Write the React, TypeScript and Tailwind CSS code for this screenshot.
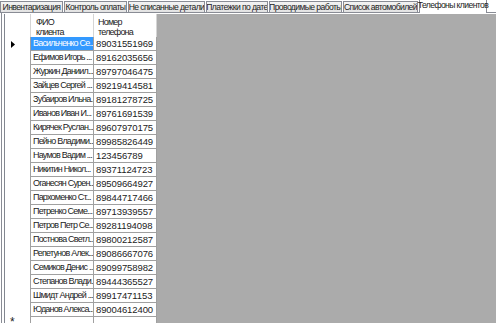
const tabs = [
  { label: "Инвентаризация", w: "w-[63px]" },
  { label: "Контроль оплаты", w: "w-[63px]" },
  { label: "Не списанные детали", w: "w-[77px]" },
  { label: "Платежки по дате", w: "w-[62px]" },
  { label: "Проводимые работы", w: "w-[73px]" },
  { label: "Список автомобилей", w: "w-[75px]" },
];

const rows: [string, string][] = [
  ["Васильченко Се...", "89031551969"],
  ["Ефимов Игорь ...", "89162035656"],
  ["Журкин Даниил...", "89797046475"],
  ["Зайцев Сергей ...", "89219414581"],
  ["Зубаиров Ильна...", "89181278725"],
  ["Иванов Иван И...", "89761691539"],
  ["Кирячек Руслан...", "89607970175"],
  ["Пейно Владими...", "89985826449"],
  ["Наумов Вадим ...", "123456789"],
  ["Никитин Никол...", "89371124723"],
  ["Оганесян Сурен...", "89509664927"],
  ["Пархоменко Ст...", "89844717466"],
  ["Петренко Семе...", "89713939557"],
  ["Петров Петр Се...", "89281194098"],
  ["Постнова Светл...", "89800212587"],
  ["Репетунов Алек...", "89086667076"],
  ["Семиков Денис ...", "89099758982"],
  ["Степанов Влади...", "89444365527"],
  ["Шмидт Андрей ...", "89917471153"],
  ["Юданов Алекса...", "89004612400"],
];

export default function App() {
  return (
    <div
      className="w-[496px] h-[323px] bg-white overflow-hidden flex flex-col text-[9px] tracking-[-0.8px] text-[#222]"
      style={{ fontFamily: '"Liberation Sans", Arial, sans-serif' }}
    >
      {/* Tab strip */}
      <div className="flex items-end h-[13px] shrink-0 border-b border-[#898c95] text-[8.6px] tracking-[-0.6px]">
        {tabs.map((t) => (
          <div
            key={t.label}
            className={`${t.w} h-[11px] mr-[1px] border border-b-0 border-[#898c95] bg-gradient-to-b from-[#f3f3f3] to-[#e2e2e2] flex items-center justify-center leading-none whitespace-nowrap overflow-hidden`}
          >
            {t.label}
          </div>
        ))}
        <div className="w-[68px] h-[14px] -mb-px border border-b-0 border-[#898c95] bg-white flex items-center justify-center leading-none whitespace-nowrap pb-[2px]">
          Телефоны клиентов
        </div>
      </div>

      {/* Tab page */}
      <div className="flex-1 flex ml-[1px] border-l border-[#898c95] pl-[2px] pt-[1px]">
        <div className="flex-1 flex flex-col bg-[#ababab] border-l border-[#828790]">
          {/* header */}
          <div className="flex h-[23px] shrink-0">
            <div className="w-[26px] bg-white border-r border-[#d5d5d5]" />
            <div className="w-[63px] bg-white border-r border-[#d5d5d5] px-[5px] pt-[3px] leading-[10px]">
              ФИО
              <br />
              клиента
            </div>
            <div className="w-[63px] bg-white border-r border-[#d5d5d5] px-[4px] pt-[3px] leading-[10px]">
              Номер
              <br />
              телефона
            </div>
          </div>

          {rows.map(([name, phone], i) => (
            <div key={i} className="flex h-[14px] shrink-0">
              <div className="w-[26px] bg-white border-r border-[#a0a0a0] flex items-center pl-[6px]">
                {i === 0 && (
                  <svg width="4" height="7" viewBox="0 0 4 7">
                    <path d="M0 0 L4 3.5 L0 7 Z" fill="#000" />
                  </svg>
                )}
              </div>
              <div
                className={`w-[63px] border-r border-b border-[#a0a0a0] pl-[2px] leading-[13px] whitespace-nowrap overflow-hidden ${
                  i === 0 ? "bg-[#3399ff] text-white" : "bg-white"
                }`}
              >
                {name}
              </div>
              <div className="w-[63px] bg-white border-r border-b border-[#a0a0a0] pl-[2px] leading-[13px] whitespace-nowrap overflow-hidden text-[9.5px] tracking-[-0.1px]">
                {phone}
              </div>
            </div>
          ))}

          {/* new row */}
          <div className="flex h-[14px] shrink-0">
            <div className="w-[26px] bg-white border-r border-[#a0a0a0] pl-[5px] leading-[11px] text-[12px]">
              *
            </div>
            <div className="w-[63px] bg-white border-r border-[#a0a0a0]" />
            <div className="w-[63px] bg-white border-r border-[#a0a0a0]" />
          </div>
        </div>
      </div>
    </div>
  );
}
